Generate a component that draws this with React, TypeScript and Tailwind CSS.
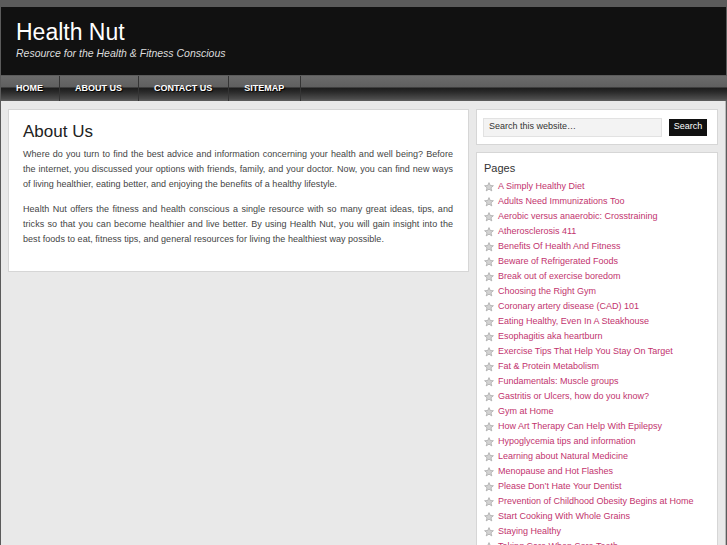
import React from "react";

const pages = [
  "A Simply Healthy Diet",
  "Adults Need Immunizations Too",
  "Aerobic versus anaerobic: Crosstraining",
  "Atherosclerosis 411",
  "Benefits Of Health And Fitness",
  "Beware of Refrigerated Foods",
  "Break out of exercise boredom",
  "Choosing the Right Gym",
  "Coronary artery disease (CAD) 101",
  "Eating Healthy, Even In A Steakhouse",
  "Esophagitis aka heartburn",
  "Exercise Tips That Help You Stay On Target",
  "Fat & Protein Metabolism",
  "Fundamentals: Muscle groups",
  "Gastritis or Ulcers, how do you know?",
  "Gym at Home",
  "How Art Therapy Can Help With Epilepsy",
  "Hypoglycemia tips and information",
  "Learning about Natural Medicine",
  "Menopause and Hot Flashes",
  "Please Don’t Hate Your Dentist",
  "Prevention of Childhood Obesity Begins at Home",
  "Start Cooking With Whole Grains",
  "Staying Healthy",
  "Taking Care When Sore Teeth",
  "Tips For Healthy Living",
];

const nav = ["HOME", "ABOUT US", "CONTACT US", "SITEMAP"];

function Star() {
  return (
    <svg width="10" height="10" viewBox="0 0 10 10" className="shrink-0">
      <path
        d="M5 0.6 L6.3 3.5 L9.4 3.7 L7 5.8 L7.8 8.9 L5 7.2 L2.2 8.9 L3 5.8 L0.6 3.7 L3.7 3.5 Z"
        fill="#d2d2d2"
        stroke="#a5a5a5"
        strokeWidth="0.7"
      />
    </svg>
  );
}

export default function App() {
  return (
    <div
      className="w-[727px] h-[545px] overflow-hidden bg-[#5b5b5b]"
      style={{ fontFamily: '"Liberation Sans", Arial, sans-serif' }}
    >
      <div className="h-[7px]" />
      <div className="ml-[1px] w-[725px] h-[68px] bg-[#111111] pl-[15px] pt-[12px]">
        <div className="text-[23px] leading-[26px] text-white">Health Nut</div>
        <div className="mt-[1px] text-[10.5px] italic leading-[14px] text-[#dddddd]">
          Resource for the Health &amp; Fitness Conscious
        </div>
      </div>
      <div className="h-[1px] bg-[#5b5b5b]" />
      <div className="ml-[1px] w-[726px] h-[25px] flex bg-[linear-gradient(to_bottom,#6b6b6b_0%,#5f5f5f_44%,#1c1c1c_48%,#2b2b2b_65%,#4a4a4a_90%,#5e5e5e_100%)]">
        {nav.map((n) => (
          <div
            key={n}
            className="h-full flex items-center pl-[15px] pr-[16px] border-r border-[#343434] text-[9px] font-bold text-white [text-shadow:1px_1px_1px_#000]"
          >
            {n}
          </div>
        ))}
      </div>
      <div className="ml-[1px] w-[725px] h-[445px] bg-[#e9e9e9] border-r border-[#b9b9b9] flex items-start gap-[7px] pl-[7px] pt-[8px]">
        <div className="w-[461px] bg-white border border-[#d6d6d6] pl-[14px] pr-[15px] pt-[12px] pb-[14px]">
          <h1 className="text-[17px] leading-[20px] text-[#222222]">About Us</h1>
          <p className="mt-[5px] text-[9px] leading-[15px] tracking-[0.04px] text-[#444444] text-justify">
            Where do you turn to find the best advice and information concerning your health and well being? Before the internet, you discussed your options with friends, family, and your doctor. Now, you can find new ways of living healthier, eating better, and enjoying the benefits of a healthy lifestyle.
          </p>
          <p className="mt-[10px] mb-[10px] text-[9px] leading-[15px] tracking-[0.04px] text-[#444444] text-justify">
            Health Nut offers the fitness and health conscious a single resource with so many great ideas, tips, and tricks so that you can become healthier and live better. By using Health Nut, you will gain insight into the best foods to eat, fitness tips, and general resources for living the healthiest way possible.
          </p>
        </div>
        <div className="w-[242px] flex flex-col gap-[7px]">
          <div className="h-[36px] bg-white border border-[#d6d6d6] flex items-center pl-[6px] gap-[7px]">
            <div className="w-[179px] h-[19px] bg-[#f3f3f3] border border-[#e2e2e2] flex items-center pl-[5px] text-[9px] text-[#333333]">
              Search this website…
            </div>
            <div className="w-[38px] h-[17px] bg-[#111111] flex items-center justify-center text-[9px] text-white">
              Search
            </div>
          </div>
          <div className="bg-white border border-[#d6d6d6] pl-[7px] pt-[8px]">
            <div className="text-[11px] leading-[14px] text-[#333333]">Pages</div>
            <ul className="mt-[4px]">
              {pages.map((p) => (
                <li key={p} className="h-[15px] flex items-center gap-[4px] text-[9px] text-[#c2336e]">
                  <Star />
                  <span>{p}</span>
                </li>
              ))}
            </ul>
          </div>
        </div>
      </div>
    </div>
  );
}
